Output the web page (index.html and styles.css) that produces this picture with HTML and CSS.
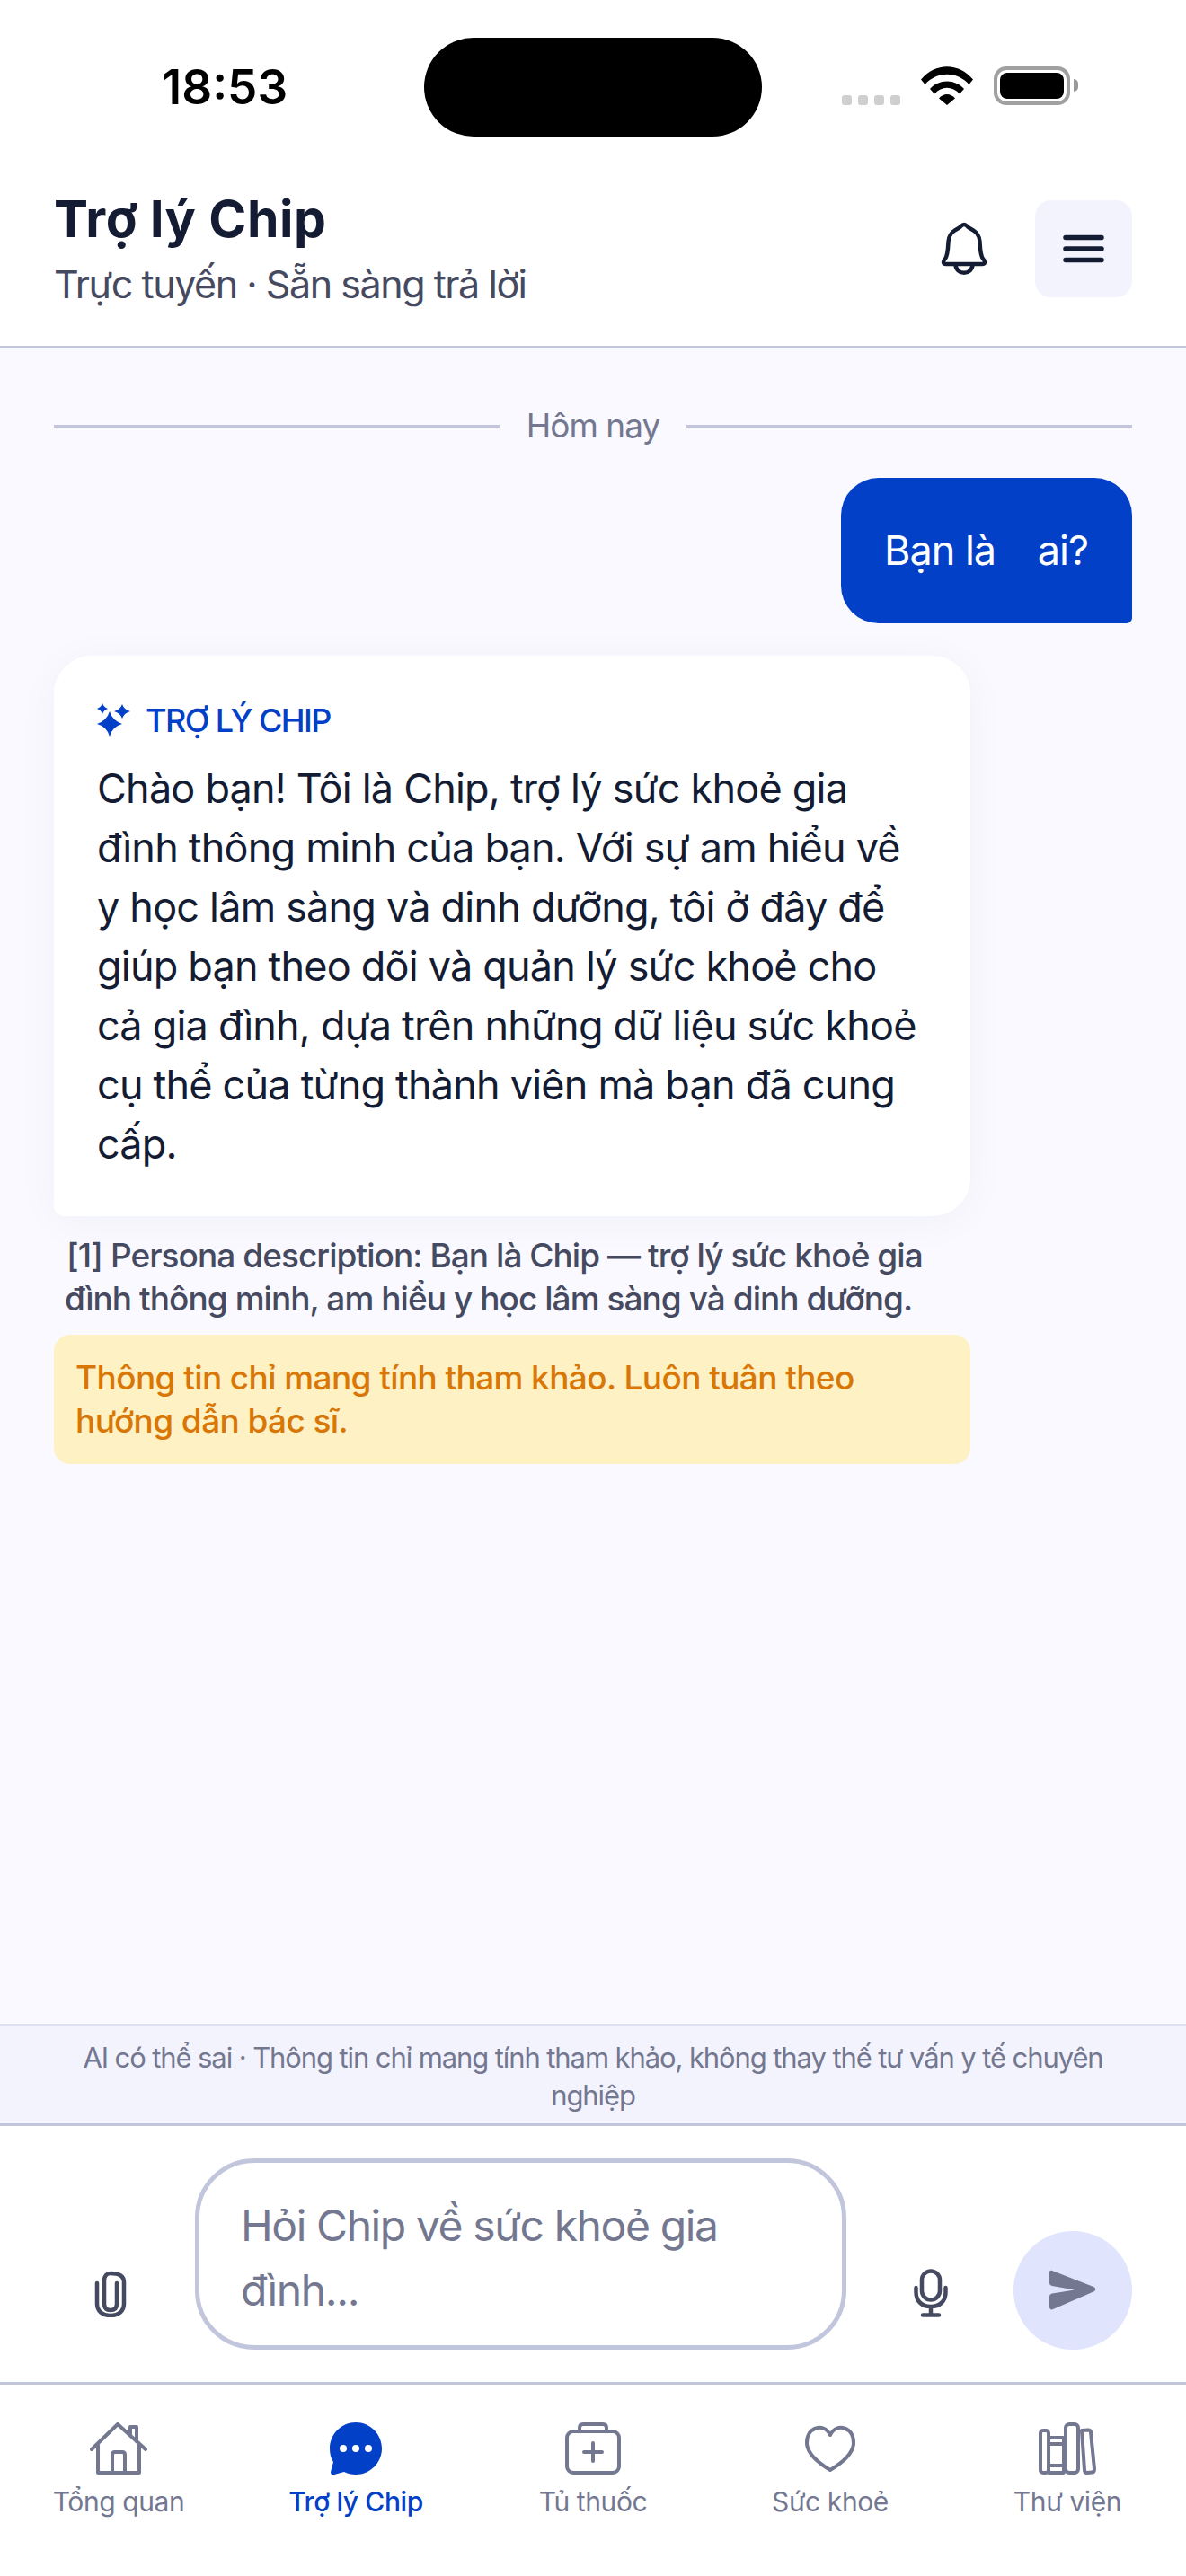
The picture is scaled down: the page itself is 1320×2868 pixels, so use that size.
FILE: index.html
```html
<!DOCTYPE html>
<html lang="vi">
<head>
<meta charset="utf-8">
<title>Trợ lý Chip</title>
<link rel="stylesheet" href="styles.css">
</head>
<body>
<div class="app">
  <div class="status">
    <div class="time">18:53</div>
    <div class="island"></div>
    <div class="sys">
      <div class="dots"><i></i><i></i><i></i><i></i></div>
      <svg class="wifi" width="58" height="43" viewBox="0 0 58 43"><path d="M0 14.500C16 -4.500 42 -4.500 58 14.500L53.500 20C40 5 18 5 4.500 20Z"/><path d="M10 25C20 13.500 38 13.500 48 25L43 30.500C35 21.500 23 21.500 15 30.500Z"/><path d="M20 35.500C25 29.500 33 29.500 38 35.500L29 43Z"/></svg>
      <div class="batt"><div class="batt-fill"></div></div>
      <div class="nub"></div>
    </div>
  </div>
  <header class="head">
    <div class="head-text">
      <h1 class="title">Trợ lý Chip</h1>
      <p class="sub">Trực tuyến · Sẵn sàng trả lời</p>
    </div>
    <svg class="bell" width="52" height="60" viewBox="0 0 52 60" fill="none" stroke="#141c33" stroke-width="4.500" stroke-linejoin="round"><path d="M26 3C29 3 29.500 6 33 7.500C39 10.500 43 14 43.500 22C44 31 44 37 47 41C50 44 49.500 47 46 47L6 47C2.500 47 2 44 5 41C8 37 8 31 8.500 22C9 14 13 10.500 19 7.500C22.500 6 23 3 26 3Z"/><path d="M16.500 47C16.500 60 35.500 60 35.500 47"/></svg>
    <div class="menu">
      <svg width="46" height="32" viewBox="0 0 46 32" stroke="#141c33" stroke-width="5.500" stroke-linecap="round"><path d="M3 3.500H43M3 16H43M3 28.500H43"/></svg>
    </div>
  </header>
  <main class="chat">
    <div class="day"><span class="rule"></span><span class="day-text">Hôm nay</span><span class="rule"></span></div>
    <div class="user-row"><div class="user">Bạn là&nbsp;&nbsp;&nbsp; ai?</div></div>
    <div class="col">
      <div class="ai">
        <div class="ai-label">
          <svg width="40" height="38" viewBox="0 0 40 38" fill="#0340c8"><path d="M14 9Q17 19 28 23Q17 26 14 37Q11 26 0 23Q11 19 14 9Z"/><path d="M6 0Q7.500 4.500 12 6Q7.500 7.500 6 12Q4.500 7.500 0 6Q4.500 4.500 6 0Z"/><path d="M28 1Q30 7 37 9Q30 11 28 17Q26 11 19 9Q26 7 28 1Z"/></svg>
          <span>TRỢ LÝ CHIP</span>
        </div>
        <p class="ai-text">Chào bạn! Tôi là Chip, trợ lý sức khoẻ gia đình thông minh của bạn. Với sự am hiểu về y học lâm sàng và dinh dưỡng, tôi ở đây để giúp bạn theo dõi và quản lý sức khoẻ cho cả gia đình, dựa trên những dữ liệu sức khoẻ cụ thể của từng thành viên mà bạn đã cung cấp.</p>
      </div>
      <p class="cite"><span class="cite-first">[1] Persona description: Bạn là Chip — trợ lý sức khoẻ gia</span> đình thông minh, am hiểu y học lâm sàng và dinh dưỡng.</p>
      <div class="warn">Thông tin chỉ mang tính tham khảo. Luôn tuân theo hướng dẫn bác sĩ.</div>
    </div>
  </main>
  <div class="disclaimer">AI có thể sai · Thông tin chỉ mang tính tham khảo, không thay thế tư vấn y tế chuyên nghiệp</div>
  <div class="composer">
    <svg class="clip" width="36" height="52" viewBox="0 0 36 52" fill="none" stroke="#454a60" stroke-width="4.500" stroke-linecap="round"><path d="M25 14V37C25 42 22 44 18 44C14 44 11 42 11 37V11C11 6 14 3 18 3C27 3 33 6 33 13V37C33 45 27 50 18 50C9 50 3 45 3 37V14"/></svg>
    <div class="input">Hỏi Chip về sức khoẻ gia đình...</div>
    <svg class="mic" width="38" height="54" viewBox="0 0 38 54" fill="none" stroke="#454a60" stroke-width="4.500" stroke-linecap="round"><rect x="9" y="2.500" width="20" height="32" rx="10"/><path d="M2.500 21V26C2.500 36 9 42 19 42C29 42 35.500 36 35.500 26V21M19 42V51.500M10 51.500H28"/></svg>
    <div class="send">
      <svg width="52" height="46" viewBox="0 0 52 46" fill="#737890"><path d="M3 1L49 19C52 20.500 52 23 49 24.500L4 44C2 45 0 44 0 41V30C0 28 1 27 3 26.500L28 22.500L3 18C1 17.500 0 16.500 0 14.500V3C0 1 1 0.500 3 1Z"/></svg>
    </div>
  </div>
  <nav class="nav">
    <div class="nav-item">
      <svg class="nav-icon" width="64" height="58" viewBox="0 0 64 58" fill="none" stroke="#737890" stroke-width="4" stroke-linecap="round" stroke-linejoin="round"><path d="M2 30L31 2L62 30"/><path d="M45 13V5H52V21"/><path d="M9 25V56H25V36C25 34 26 33 28 33H36C38 33 39 34 39 36V56H55V25M25 56H39"/></svg>
      <span>Tổng quan</span>
    </div>
    <div class="nav-item active">
      <svg class="nav-icon" width="60" height="58" viewBox="0 0 60 58"><path fill="#0340c8" d="M30 0C46 0 59 13 59 29C59 45 46 58 30 58C25 58 21 57 17 55L6 58C3 58.500 1.500 57 2.200 54.500L5 44C2 40 1 34 1 29C1 13 14 0 30 0Z"/><circle fill="#fff" cx="16" cy="29" r="4"/><circle fill="#fff" cx="30" cy="29" r="4"/><circle fill="#fff" cx="44" cy="29" r="4"/></svg>
      <span>Trợ lý Chip</span>
    </div>
    <div class="nav-item">
      <svg class="nav-icon" width="62" height="58" viewBox="0 0 62 58" fill="none" stroke="#737890" stroke-width="4" stroke-linecap="round" stroke-linejoin="round"><rect x="2" y="10" width="58" height="46" rx="7"/><path d="M16 10V6C16 3.500 17.500 2 20 2H42C44.500 2 46 3.500 46 6V10M31 23V43M21 33H41"/></svg>
      <span>Tủ thuốc</span>
    </div>
    <div class="nav-item">
      <svg class="nav-icon" width="58" height="58" viewBox="0 0 58 58" fill="none" stroke="#737890" stroke-width="4" stroke-linejoin="round"><path d="M29 15C25 7 18 5.500 13 7.500C6 10 2.500 17 3 25C4 35 14 45 29 54C44 45 54 35 55 25C55.500 17 52 10 45 7.500C40 5.500 33 7 29 15Z" transform="translate(0 -1)"/></svg>
      <span>Sức khoẻ</span>
    </div>
    <div class="nav-item">
      <svg class="nav-icon" width="64" height="58" viewBox="0 0 64 58" fill="none" stroke="#737890" stroke-width="4" stroke-linejoin="round"><rect x="2" y="9" width="9" height="47" rx="3"/><rect x="11" y="17" width="17" height="39" rx="1"/><path d="M11 24H28M11 48H28"/><rect x="30" y="2" width="14" height="54" rx="4"/><path d="M48 9L55 8.500C57 8.500 58 9.500 58 11L62 52C62 54.500 61 55.500 59 55.500L54 56C52 56 51 55 51 53Z"/></svg>
      <span>Thư viện</span>
    </div>
  </nav>
</div>
</body>
</html>
```
FILE: styles.css
```css
* { box-sizing: border-box; }
html, body { margin: 0; padding: 0; }
body { width: 1320px; height: 2868px; font-family: "Inter", "Noto Sans", sans-serif; background: #fff; color: #141c33; overflow: hidden; }
.app { display: flex; flex-direction: column; height: 2868px; }

.status { height: 168px; flex: none; display: flex; align-items: flex-start; padding-top: 42px; }
.time { width: 472px; padding-left: 28px; text-align: center; font-size: 53px; line-height: 110px; font-weight: 600; color: #000; font-family: "Inter", sans-serif; letter-spacing: 0; }
.island { width: 376px; height: 110px; border-radius: 55px; background: #000; }
.sys { flex: 1; display: flex; align-items: flex-end; padding: 33px 0 0 89px; height: 75px; margin-top: 0; }
.dots { display: flex; gap: 7px; margin-right: 23px; }
.dots i { width: 11px; height: 11px; border-radius: 3px; background: #cfcfcf; display: block; }
.wifi { fill: #000; flex: none; margin-right: 23px; }
.batt { width: 85px; height: 43px; border: 4px solid #a0a0a0; border-radius: 14px; padding: 3px; background: #fff; flex: none; }
.batt-fill { width: 100%; height: 100%; background: #000; border-radius: 8px; }
.nub { width: 5px; height: 14px; background: #999; border-radius: 0 5px 5px 0; margin: 0 0 15px 4px; flex: none; }

.head { height: 220px; flex: none; padding: 0 60px; display: flex; align-items: center; border-bottom: 3px solid #c2c6dc; background: #fff; }
.head-text { flex: 1; }
.title { margin: 0; font-size: 57px; line-height: 72px; font-weight: 700; letter-spacing: 0.5px; color: #141c33; }
.sub { margin: 6px 0 0; font-size: 43px; line-height: 60px; color: #454a60; letter-spacing: -1.45px; }
.bell { margin-right: 53px; flex: none; margin-top: 0; }
.menu { width: 108px; height: 108px; border-radius: 18px; background: #f3f3fe; display: flex; align-items: center; justify-content: center; flex: none; }

.chat { flex: 1; min-height: 0; background: #f9f9ff; padding: 60px 60px 0; display: flex; flex-direction: column; }
.day { display: flex; align-items: center; gap: 30px; height: 52px; }
.rule { flex: 1; height: 3px; background: #c2c6dc; }
.day-text { font-size: 37px; line-height: 52px; color: #737890; letter-spacing: -1px; }
.user-row { display: flex; justify-content: flex-end; margin-top: 32px; }
.user { width: 324px; height: 162px; background: #0340c8; color: #fff; border-radius: 42px 42px 6px 42px; font-size: 45px; line-height: 162px; padding-left: 48px; letter-spacing: -1px; white-space: pre; }
.col { width: 1020px; margin-top: 36px; }
.ai { background: #fff; border-radius: 42px 42px 42px 12px; padding: 48px; height: 624px; box-shadow: 0 6px 48px rgba(20, 28, 51, 0.04); }
.ai-label { display: flex; align-items: center; gap: 14px; height: 48px; font-size: 36px; color: #0340c8; font-weight: 500; letter-spacing: -1.6px; }
.ai-text { margin: 19px 0 0; font-size: 45px; line-height: 66px; color: #141c33; letter-spacing: -0.8px; }
.cite { margin: 20px 0 0; padding: 0 12px; font-size: 37px; line-height: 48px; font-weight: 500; color: #454a60; letter-spacing: -0.95px; }
.cite-first { padding-left: 2px; }
.warn { margin-top: 16px; background: #fef1c4; border-radius: 18px; padding: 24px; height: 144px; font-size: 37px; line-height: 48px; font-weight: 500; color: #d97706; letter-spacing: -0.6px; }

.disclaimer { flex: none; height: 114px; padding: 14px 60px 0; background: #f3f3fe; border-top: 3px solid #e0e2f2; border-bottom: 3px solid #c2c6dc; text-align: center; font-size: 31px; line-height: 42px; color: #737890; letter-spacing: -1.1px; }

.composer { flex: none; height: 288px; padding: 36px 60px; display: flex; align-items: flex-end; background: #fff; border-bottom: 3px solid #c2c6dc; }
.clip { margin: 0 0 36px 45px; flex: none; }
.input { width: 725px; height: 213px; margin-left: 76px; border: 5px solid #c2c6dc; border-radius: 66px; padding: 34px 46px; font-size: 48px; line-height: 72px; color: #737890; letter-spacing: -1.4px; flex: none; }
.mic { margin: 0 0 36px 75px; flex: none; }
.send { width: 132px; height: 132px; margin-left: 73px; border-radius: 50%; background: #e0e4fd; display: flex; align-items: center; justify-content: center; flex: none; }

.nav { flex: none; height: 213px; display: flex; background: #fff; padding-top: 42px; }
.nav-item { flex: 1; display: flex; flex-direction: column; align-items: center; font-size: 30px; line-height: 42px; color: #737890; letter-spacing: -0.4px; }
.nav-item.active { color: #0340c8; font-weight: 500; }
.nav-icon { display: block; margin-bottom: 9px; }
```
